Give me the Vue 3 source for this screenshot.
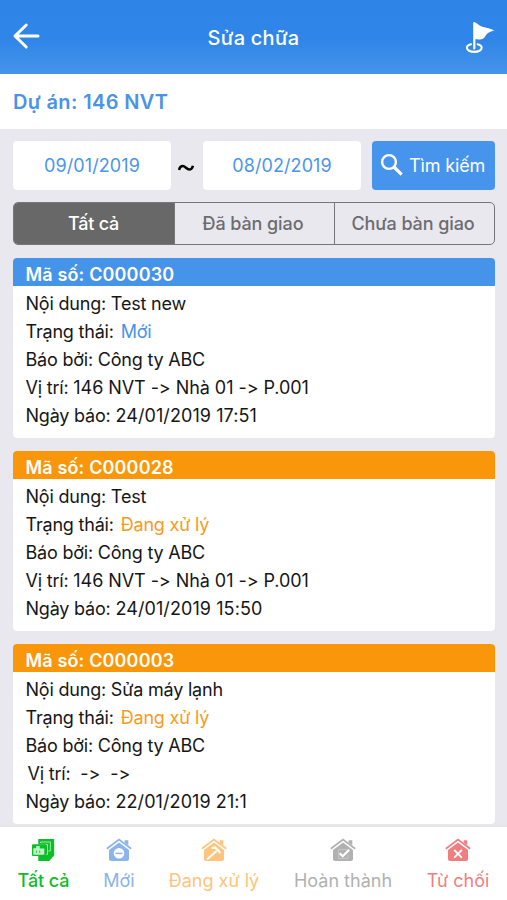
<script setup>
const filters = ['Tất cả', 'Đã bàn giao', 'Chưa bàn giao']

const tickets = [
  { code: 'C000030', content: 'Test new', status: 'Mới', kind: 'new', place: '146 NVT -> Nhà 01 -> P.001', date: '24/01/2019 17:51' },
  { code: 'C000028', content: 'Test', status: 'Đang xử lý', kind: 'progress', place: '146 NVT -> Nhà 01 -> P.001', date: '24/01/2019 15:50' },
  { code: 'C000003', content: 'Sửa máy lạnh', status: 'Đang xử lý', kind: 'progress', place: ' ->  ->', date: '22/01/2019 21:1', indent: true },
]

const tabs = [
  { label: 'Tất cả', kind: 'all' },
  { label: 'Mới', kind: 'new' },
  { label: 'Đang xử lý', kind: 'progress' },
  { label: 'Hoàn thành', kind: 'done' },
  { label: 'Từ chối', kind: 'reject' },
]
</script>

<template>
  <div class="screen">
    <header class="header">
      <svg class="back" viewBox="0 0 28 28" fill="none" stroke="#fff" stroke-width="3" stroke-linecap="round" stroke-linejoin="round">
        <path d="M14.200 3 3 14l11.200 11M3.500 14H26" />
      </svg>
      <h1><span class="title">Sửa chữa</span></h1>
      <svg class="flag" viewBox="0 0 30 34" fill="none" stroke="#fff">
        <path d="M9.300 2v25.500" stroke-width="2.200" stroke-linecap="round" />
        <path d="M9.300 1.300c2.500.4 4.700 3.600 8 4.500 4 1.100 8.500 1.600 12 3.800-3.500.9-6.800 2.200-8.600 4.800-1.200 2-2 3.400-4.200 3.900-2.200.5-4.700.2-7.200-.2z" fill="#fff" stroke="none" />
        <path d="M6 23.300C3.500 23.900 1.900 25.200 1.900 26.800c0 2.300 3.300 4.100 7.400 4.100s7.400-1.800 7.400-4.100c0-1.600-1.600-2.900-4.100-3.500" stroke-width="2.100" stroke-linecap="round" />
      </svg>
    </header>

    <div class="project"><span class="project-name">Dự án: 146 NVT</span></div>

    <main class="content">
      <div class="search">
        <div class="date"><span>09/01/2019</span></div>
        <div class="tilde">
          <svg viewBox="0 0 16 8" fill="none" stroke="#050505" stroke-width="2.500"><path d="M1 6C1.600 3.600 2.800 2 4.700 2 7.200 2 8.700 5.600 11.200 5.600c1.900 0 3.100-1.300 3.800-3.900" /></svg>
        </div>
        <div class="date"><span>08/02/2019</span></div>
        <button class="submit">
          <svg viewBox="0 0 24 24" fill="none" stroke="#fff"><circle cx="9" cy="9" r="6.900" stroke-width="2.400" /><path d="m14 14 7.700 7.700" stroke-width="3.200" /></svg>
          <span class="submit-label">Tìm kiếm</span>
        </button>
      </div>

      <div class="segments">
        <div v-for="(f, i) in filters" :key="f" class="segment" :class="{ active: i === 0 }"><span>{{ f }}</span></div>
      </div>

      <article v-for="t in tickets" :key="t.code" class="card" :class="t.kind">
        <div class="card-head"><span>Mã số: {{ t.code }}</span></div>
        <div class="card-body">
          <p><span>Nội dung: {{ t.content }}</span></p>
          <p><span>Trạng thái:</span><span class="status">{{ t.status }}</span></p>
          <p><span>Báo bởi: Công ty ABC</span></p>
          <p :class="{ indent: t.indent }"><span>Vị trí: </span><span class="place">{{ t.place }}</span></p>
          <p><span>Ngày báo: </span><span class="when">{{ t.date }}</span></p>
        </div>
      </article>
    </main>

    <nav class="tabs">
      <div v-for="t in tabs" :key="t.kind" class="tab" :class="'tab-' + t.kind">
        <svg v-if="t.kind === 'all'" class="icon" viewBox="0 0 26 24">
          <path d="M8.300 1h15.900v16.500L19.200 23H8.300z" fill="currentColor" />
          <path d="M10.500 5V4h9.800v9h-2M8.500 7v-.6h9v10h-2" fill="none" stroke="#a5eaaa" stroke-width="1" />
          <rect x="2" y="6.300" width="14.200" height="11.700" rx="1" fill="currentColor" />
          <path d="M3.300 16.700V10.200h2.900V8h3.500v2.600h4.600v6.100z" fill="#c0f2c4" />
          <path d="M6.500 12.500v2.500M9.700 12.500v2.500" stroke="currentColor" stroke-width=".7" />
        </svg>
        <svg v-else class="icon" viewBox="0 0 26 24">
          <path d="M3 12 13 4.500 23 12v9q0 2-2 2H5q-2 0-2-2z" fill="currentColor" />
          <path d="M.8 10.700 13 1.600l12.200 9.100" fill="none" stroke="currentColor" stroke-width="1.700" />
          <path d="M18.700 2.300h3.600v5l-3.600-2.600z" fill="currentColor" />
          <template v-if="t.kind === 'new'">
            <circle cx="13" cy="15.300" r="5.300" fill="#fff" />
            <path d="M9.500 15.400h7" stroke="currentColor" stroke-width="1.500" />
          </template>
          <path v-else-if="t.kind === 'progress'" d="m6 21.500 9.500-8.500M10.500 10.200l3.600-.7 3.800 3.800 1.200 2" fill="none" stroke="#fff" stroke-width="2.200" />
          <template v-else-if="t.kind === 'done'">
            <path d="M17.500 11.500H8.500v9h9.500v-4" fill="none" stroke="#cacaca" stroke-width=".8" />
            <path d="m9.700 15.300 3 3 6.500-6.500" fill="none" stroke="#fff" stroke-width="2.100" />
          </template>
          <path v-else d="m9.200 12 7.600 7.700m0-7.700-7.600 7.700" fill="none" stroke="#fff" stroke-width="1.800" />
        </svg>
        <span class="tab-label">{{ t.label }}</span>
      </div>
    </nav>
  </div>
</template>

<style>
body { background: #e9e8ee; }
</style>

<style scoped>
* { box-sizing: border-box; }
.screen {
  width: 507px;
  height: 900px;
  display: flex;
  flex-direction: column;
  overflow: hidden;
  background: #e9e8ee;
  color: #161616;
  font-family: Inter, "Noto Sans", sans-serif;
  font-size: 18px;
  white-space: pre;
}
.header {
  height: 74px;
  flex: none;
  display: grid;
  grid-template-columns: 60px 1fr 60px;
  align-items: center;
  padding: 2px 12px 0;
  background: linear-gradient(#2f84e7 0%, #3086e8 55%, #4694ea 100%);
  color: #fff;
}
.back { width: 28px; height: 28px; margin-top: -4px; }
h1 { margin: 0; font-size: 20px; font-weight: 500; line-height: 24px; text-align: center; }
.title { letter-spacing: 0.25px; }
.flag { width: 30px; height: 34px; justify-self: end; }
.project {
  height: 55px;
  flex: none;
  padding: 14px 13px 0;
  background: #fff;
  color: #4b93e4;
  font-size: 20px;
  font-weight: 600;
  line-height: 29px;
}
.project-name { letter-spacing: 0.37px; }
.content { flex: 1; min-height: 0; padding: 12px 12px 0 13px; }
.search { height: 49px; display: grid; grid-template-columns: 158px 32px 158px 122px; }
.search .submit { margin-left: 11px; width: 123px; }
.date {
  display: flex;
  align-items: center;
  justify-content: center;
  border-radius: 4px;
  background: #fff;
  color: #4b96e9;
  letter-spacing: 0.1px;
}
.tilde { display: flex; align-items: center; justify-content: center; padding: 4px 2px 0 0; }
.tilde svg { width: 16px; height: 8px; }
.submit {
  display: flex;
  align-items: center;
  gap: 5px;
  padding: 0 0 0 8px;
  border: 0;
  border-radius: 4px;
  background: #4694ec;
  color: #fff;
  font: inherit;
}
.submit svg { width: 24px; height: 24px; flex: none; margin-top: -1px; }
.submit-label { letter-spacing: -0.15px; }
.segments {
  height: 43px;
  margin: 12px 0 12.5px;
  display: grid;
  grid-template-columns: 160px 160px 1fr;
  border: 1px solid #77777b;
  border-radius: 5px;
  overflow: hidden;
  color: #6c6c70;
}
.segment { display: flex; align-items: center; justify-content: center; padding-right: 1px; font-weight: 500; letter-spacing: -0.2px; }
.segment + .segment { padding-right: 3px; border-left: 1px solid #77777b; letter-spacing: -0.1px; }
.segment.active { background: #686868; color: #fff; }
.card { height: 180px; margin-bottom: 13px; border-radius: 4px; overflow: hidden; background: #fff; }
.card-head {
  height: 28px;
  padding: 3.500px 12.500px 0;
  background: #4694ea;
  color: #fff;
  font-weight: 600;
  line-height: 28px;
  letter-spacing: 0.15px;
}
.progress .card-head { background: #fa960a; }
.card-body { padding: 4px 12.500px; }
p { height: 28px; margin: 0; line-height: 28px; letter-spacing: -0.2px; }
.status { margin-left: 7px; color: #4694ea; }
.progress .status { color: #f99a1b; }
.place { font-feature-settings: "calt" 0; letter-spacing: -0.06px; }
.when { letter-spacing: 0.08px; }
.indent { padding-left: 2px; }
.tabs {
  height: 75px;
  flex: none;
  display: grid;
  grid-template-columns: 81px 70px 120px 138px 92px;
  padding: 11px 0 0 3px;
  border-top: 2px solid #e6e6e8;
  background: #fff;
}
.tab { display: flex; flex-direction: column; align-items: center; }
.icon { width: 26px; height: 24px; }
.tab-label { margin-top: 7px; line-height: 24px; }
.tab-all { color: #0dbd2a; }
.tab-all .icon { margin-right: 1px; }
.tab-all .tab-label { font-weight: 500; letter-spacing: -0.1px; }
.tab-new { color: #8ab4ea; }
.tab-progress { color: #fcc47c; }
.tab-done { color: #b1b1b1; }
.tab-reject { color: #ef7e80; }
</style>
